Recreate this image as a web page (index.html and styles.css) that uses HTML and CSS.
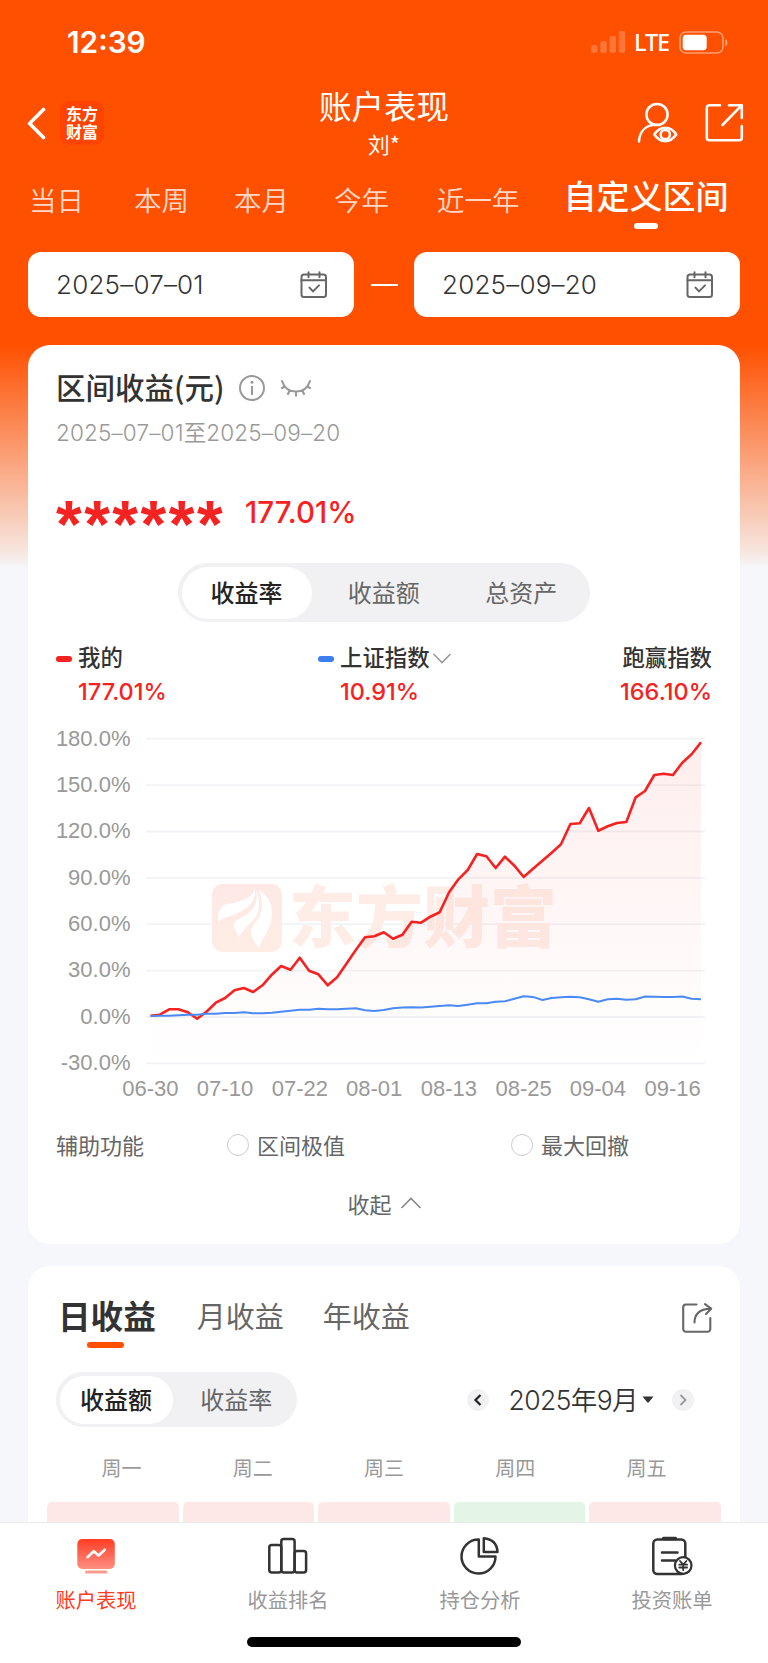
FILE: index.html
```html
<!DOCTYPE html>
<html lang="zh-CN">
<head>
    <meta charset="UTF-8">
    <meta name="viewport" content="width=device-width, initial-scale=1.0">
    <title>账户表现</title>
    <link rel="stylesheet" href="styles.css">
</head>
<body>
    <div class="page">
        <div class="content">
            <!-- Status bar -->
            <div class="status-bar">
                <span class="time">12:39</span>
                <div class="status-icons">
                    <svg class="signal" width="35" height="22" viewBox="0 0 35 22">
                        <rect x="0" y="14" width="6.5" height="8" rx="2"/>
                        <rect x="9.3" y="10" width="6.5" height="12" rx="2"/>
                        <rect x="18.5" y="5" width="6.5" height="17" rx="2"/>
                        <rect x="27.8" y="0" width="6.5" height="22" rx="2"/>
                    </svg>
                    <span class="network">LTE</span>
                    <svg class="battery" width="49" height="23" viewBox="0 0 49 23">
                        <rect x="1" y="1" width="43" height="21" rx="6" fill="none" stroke="#fff" stroke-opacity=".45" stroke-width="1.6"/>
                        <rect x="3.7" y="3.7" width="24" height="15.6" rx="3.5" fill="#fff"/>
                        <path d="M46.4 8v7.4c2.6-1.4 2.6-6 0-7.4z" fill="#fff" fill-opacity=".5"/>
                    </svg>
                </div>
            </div>

            <!-- Navigation -->
            <div class="nav">
                <div class="nav-left">
                    <svg width="20" height="34" viewBox="0 0 20 34" fill="none" stroke="#fff" stroke-width="3.6" stroke-linecap="round" stroke-linejoin="round">
                        <path d="M17.500 3.500 3.600 17.500 17.500 31.500"/>
                    </svg>
                    <div class="logo">东方<br>财富</div>
                </div>
                <div class="nav-title">
                    <h1>账户表现</h1>
                    <p>刘*</p>
                </div>
                <div class="nav-right">
                    <svg width="42" height="42" viewBox="0 0 42 42" fill="none" stroke="#fff" stroke-width="2.5" stroke-linecap="round">
                        <circle cx="20" cy="12.500" r="10.600"/>
                        <path d="M2 39.500C2.500 29 9 23 19.500 22.800"/>
                        <path d="M17.300 32.500C20.500 27.800 24.500 25.800 28.300 25.800s7.800 2 11 6.700c-3.200 4.600-7.200 6.700-11 6.700s-7.800-2.100-11-6.700z" stroke-linejoin="round"/>
                        <circle cx="28.300" cy="32.500" r="4.600"/>
                    </svg>
                    <svg width="40" height="40" viewBox="0 0 40 40" fill="none" stroke="#fff" stroke-width="2.6" stroke-linecap="round" stroke-linejoin="round">
                        <path d="M15 3.200H4.300a2.500 2.500 0 0 0-2.500 2.500v30A2.500 2.500 0 0 0 4.300 38.200h30a2.500 2.500 0 0 0 2.500-2.500V24"/>
                        <path d="M24 3.200h12.800V16M36.300 3.700 17.500 23"/>
                    </svg>
                </div>
            </div>

            <!-- Period tabs -->
            <div class="period-tabs">
                <span class="p1">当日</span>
                <span class="p2">本周</span>
                <span class="p3">本月</span>
                <span class="p4">今年</span>
                <span class="p5">近一年</span>
                <span class="active">自定义区间</span>
            </div>

            <!-- Date range -->
            <div class="date-range">
                <div class="date-box">
                    <span>2025–07–01</span>
                    <svg width="28" height="28" viewBox="0 0 28 28" fill="none" stroke="#666" stroke-width="2" stroke-linecap="round" stroke-linejoin="round">
                        <rect x="1.500" y="3.500" width="24.500" height="22.500" rx="2.500"/>
                        <path d="M1.500 9.300H26M8.500 1.200v5M19.500 1.200v5M9.500 16.600l3.500 3.800 6-6"/>
                    </svg>
                </div>
                <i class="range-dash"></i>
                <div class="date-box">
                    <span>2025–09–20</span>
                    <svg width="28" height="28" viewBox="0 0 28 28" fill="none" stroke="#666" stroke-width="2" stroke-linecap="round" stroke-linejoin="round">
                        <rect x="1.500" y="3.500" width="24.500" height="22.500" rx="2.500"/>
                        <path d="M1.500 9.300H26M8.500 1.200v5M19.500 1.200v5M9.500 16.600l3.500 3.800 6-6"/>
                    </svg>
                </div>
            </div>

            <!-- Profit card -->
            <div class="card profit-card">
                <div class="profit-head">
                    <h2>区间收益(元)</h2>
                    <svg width="28" height="28" viewBox="0 0 28 28" fill="none" stroke="#999" stroke-width="2">
                        <circle cx="14" cy="14" r="12"/>
                        <path d="M14 12v9"/>
                        <circle cx="14" cy="8.200" r="1.500" fill="#999" stroke="none"/>
                    </svg>
                    <svg class="eye" width="32" height="18" viewBox="0 0 32 18" fill="none" stroke="#999" stroke-width="2.100" stroke-linecap="round">
                        <path d="M2 2c2 6.500 7 10.500 14 10.500S28 8.500 30 2M5 7.500 2 9M27 7.500 30 9M9.800 11.200 8 15M16 12.500V16.800M22.200 11.200 24 15"/>
                    </svg>
                </div>
                <p class="profit-range">2025–07–01<b>至</b>2025–09–20</p>
                <div class="profit-value">
                    <span class="masked">******</span>
                    <span class="rate">177.01%</span>
                </div>

                <div class="segment segment-main">
                    <span class="active">收益率</span>
                    <span>收益额</span>
                    <span>总资产</span>
                </div>

                <div class="legend">
                    <div class="legend-item">
                        <div class="name"><i class="mark red"></i>我的</div>
                        <div class="value">177.01%</div>
                    </div>
                    <div class="legend-item index">
                        <div class="name"><i class="mark blue"></i>上证指数
                            <svg width="20" height="13" viewBox="0 0 20 13" fill="none" stroke="#999" stroke-width="1.600"><path d="M1.500 3 10 11.500 18.500 3"/></svg>
                        </div>
                        <div class="value">10.91%</div>
                    </div>
                    <div class="legend-item beat">
                        <div class="name">跑赢指数</div>
                        <div class="value">166.10%</div>
                    </div>
                </div>

                <svg class="chart" width="656" height="380" viewBox="56 725 656 380">
                    <defs>
                        <linearGradient id="area" x1="0" y1="742" x2="0" y2="1063" gradientUnits="userSpaceOnUse">
                            <stop offset="0" stop-color="#f52222" stop-opacity=".08"/>
                            <stop offset="1" stop-color="#f52222" stop-opacity="0"/>
                        </linearGradient>
                        <linearGradient id="mark" x1="0" y1="0" x2="0" y2="1">
                            <stop offset="0" stop-color="#fde8e6"/>
                            <stop offset="1" stop-color="#feede4"/>
                        </linearGradient>
                    </defs>
                    <g stroke="#f1f3f5" stroke-width="1.800">
                        <path d="M146 738.700H705M146 785.100H705M146 831.500H705M146 877.800H705M146 924.200H705M146 970.600H705M146 1017H705M146 1063.300H705"/>
                    </g>
                    <!-- Watermark -->
                    <g class="watermark">
                        <rect x="212" y="884" width="70" height="68" rx="11" fill="url(#mark)"/>
                        <path d="M255 889c-3 10-14 13-28 15-7 1-9 8-9 17 7-4 14-5 20-8 11-5 18-12 17-24z" fill="#fff"/>
                        <path d="M256.500 890c2 14-4 22-14 27-6 3-9 5-9 8 1 5 4 9 6 12 2-6 6-9 12-15 8-8 10-18 5-32z" fill="#fff"/>
                        <path d="M259 890c5 16 3 24-4 33-4 6-5 9-3 14 2 5 5 8 7 11 2-9 14-20 13-37-1-10-6-17-13-21z" fill="#fff"/>
                        <text x="289" y="942" textLength="268">东方财富</text>
                    </g>
                    <polygon fill="url(#area)" points="150.500,1063 150.500,1015.700 159.800,1014.700 169.200,1009.300 178.500,1009.300 187.800,1012.300 197.200,1018.700 206.500,1011.700 215.800,1002.700 225.100,998 234.500,990.300 243.800,988 253.100,992 262.500,985.300 271.800,974.700 281.100,966 290.500,969.700 299.800,957.700 309.100,970.700 318.400,974.300 327.800,985.300 337.100,977.300 346.400,963.700 355.800,950 365.100,937.300 374.400,936.300 383.800,932.300 393.100,938.700 402.400,934.700 411.700,921.700 421.100,922.700 430.400,916.700 439.700,912.300 449.100,892.300 458.400,879.300 467.700,870 477.100,854 486.400,856.300 495.700,868 505,856.700 514.400,865.700 523.700,877 533,868.700 542.400,860.700 551.700,852.700 561,844.300 570.400,824 579.700,823.300 589,808 598.300,830.700 607.700,826.300 617,823 626.300,822 635.700,797.300 645,791 654.300,775 663.700,773.700 673,775 682.300,762.700 691.600,754.300 701,742.300 701,1063"/>
                    <polyline fill="none" stroke="#f52222" stroke-width="2.600" stroke-linejoin="round" points="150.500,1015.700 159.800,1014.700 169.200,1009.300 178.500,1009.300 187.800,1012.300 197.200,1018.700 206.500,1011.700 215.800,1002.700 225.100,998 234.500,990.300 243.800,988 253.100,992 262.500,985.300 271.800,974.700 281.100,966 290.500,969.700 299.800,957.700 309.100,970.700 318.400,974.300 327.800,985.300 337.100,977.300 346.400,963.700 355.800,950 365.100,937.300 374.400,936.300 383.800,932.300 393.100,938.700 402.400,934.700 411.700,921.700 421.100,922.700 430.400,916.700 439.700,912.300 449.100,892.300 458.400,879.300 467.700,870 477.100,854 486.400,856.300 495.700,868 505,856.700 514.400,865.700 523.700,877 533,868.700 542.400,860.700 551.700,852.700 561,844.300 570.400,824 579.700,823.300 589,808 598.300,830.700 607.700,826.300 617,823 626.300,822 635.700,797.300 645,791 654.300,775 663.700,773.700 673,775 682.300,762.700 691.600,754.300 701,742.300"/>
                    <polyline fill="none" stroke="#4a8af4" stroke-width="2" stroke-linejoin="round" points="150.500,1016 159.800,1015.700 169.200,1015.700 178.500,1015.300 187.800,1014.700 197.200,1014.700 206.500,1013.700 215.800,1013.700 225.100,1013 234.500,1013 243.800,1012.300 253.100,1013.300 262.500,1013.300 271.800,1012.700 281.100,1011.700 290.500,1010.700 299.800,1009.700 309.100,1009.700 318.400,1008.700 327.800,1009.300 337.100,1009.300 346.400,1008.700 355.800,1008.300 365.100,1010.300 374.400,1011 383.800,1010 393.100,1008.300 402.400,1007.500 411.700,1007.200 421.100,1007.500 430.400,1006.700 439.700,1006 449.100,1005.300 458.400,1006 467.700,1004.700 477.100,1003.300 486.400,1003.300 495.700,1001.700 505,1001.300 514.400,998.700 523.700,996.200 533,996.900 542.400,1000 551.700,998 561,997.300 570.400,996.700 579.700,997.300 589,999.300 598.300,1001.700 607.700,999.300 617,998.700 626.300,999.700 635.700,999.300 645,996.500 654.300,996.800 663.700,997.100 673,997.100 682.300,996.500 691.600,998.700 701,999.200"/>
                    <g class="axis-y">
                        <text x="130.500" y="745.500">180.0%</text>
                        <text x="130.500" y="791.900">150.0%</text>
                        <text x="130.500" y="838.300">120.0%</text>
                        <text x="130.500" y="884.600">90.0%</text>
                        <text x="130.500" y="931">60.0%</text>
                        <text x="130.500" y="977.400">30.0%</text>
                        <text x="130.500" y="1023.800">0.0%</text>
                        <text x="130.500" y="1070.100">-30.0%</text>
                    </g>
                    <g class="axis-x">
                        <text x="150.300" y="1096">06-30</text>
                        <text x="225" y="1096">07-10</text>
                        <text x="299.800" y="1096">07-22</text>
                        <text x="374.200" y="1096">08-01</text>
                        <text x="448.800" y="1096">08-13</text>
                        <text x="523.600" y="1096">08-25</text>
                        <text x="597.800" y="1096">09-04</text>
                        <text x="672.600" y="1096">09-16</text>
                    </g>
                </svg>

                <div class="helpers">
                    <span class="label">辅助功能</span>
                    <span class="option"><i class="radio"></i>区间极值</span>
                    <span class="option"><i class="radio"></i>最大回撤</span>
                </div>
                <div class="collapse">收起
                    <svg width="22" height="13" viewBox="0 0 22 13" fill="none" stroke="#888" stroke-width="1.600"><path d="M1.500 11 11 1.500l9.500 9.500"/></svg>
                </div>
            </div>

            <!-- Calendar card -->
            <div class="card calendar-card">
                <div class="cal-tabs">
                    <span class="active">日收益</span>
                    <span>月收益</span>
                    <span>年收益</span>
                    <svg width="32" height="32" viewBox="0 0 32 32" fill="none" stroke="#666" stroke-width="2.100" stroke-linecap="round" stroke-linejoin="round">
                        <path d="M15.500 2.500H5A2.800 2.800 0 0 0 2.200 5.300V27A2.800 2.800 0 0 0 5 29.800H26.500A2.800 2.800 0 0 0 29.300 27V16"/>
                        <path d="M13.500 20.500c0-9 5-13.500 16-13.800M24 2.200l6.200 4.500L25 12"/>
                    </svg>
                </div>
                <div class="cal-bar">
                    <div class="segment segment-small">
                        <span class="active">收益额</span>
                        <span>收益率</span>
                    </div>
                    <div class="month">
                        <i class="circle"><svg width="10" height="14" viewBox="0 0 10 14" fill="none" stroke="#222" stroke-width="2.200"><path d="M7.500 2 2.500 7l5 5"/></svg></i>
                        <span class="month-text">2025<b>年</b>9<b>月</b></span>
                        <svg class="caret" width="12" height="7" viewBox="0 0 12 7"><path d="M.5.500h11L6.800 6.200q-.8.700-1.600 0z" fill="#333"/></svg>
                        <i class="circle"><svg width="10" height="14" viewBox="0 0 10 14" fill="none" stroke="#999" stroke-width="1.800"><path d="M2.500 2l5 5-5 5"/></svg></i>
                    </div>
                </div>
                <div class="weekdays">
                    <span>周一</span><span>周二</span><span>周三</span><span>周四</span><span>周五</span>
                </div>
                <div class="days">
                    <i class="up"></i><i class="up"></i><i class="up"></i><i class="down"></i><i class="up"></i>
                </div>
            </div>
        </div>

        <!-- Bottom tab bar -->
        <div class="tab-bar">
            <div class="tabs">
                <div class="tab active">
                    <svg width="42" height="42" viewBox="0 0 42 42">
                        <defs>
                            <linearGradient id="screen" x1="0" y1="0" x2="0" y2="1">
                                <stop offset="0" stop-color="#ff3c22"/>
                                <stop offset="1" stop-color="#ff9083"/>
                            </linearGradient>
                        </defs>
                        <rect x="2.300" y="3" width="37.500" height="30" rx="5" fill="url(#screen)"/>
                        <path d="M12.500 21.200l6.300-6 4.800 4.300 6.200-5.800" fill="none" stroke="#fff" stroke-width="2.600" stroke-linecap="round" stroke-linejoin="round"/>
                        <rect x="10" y="34.500" width="22.500" height="3" rx="1.500" fill="#ff9c90"/>
                    </svg>
                    <span>账户表现</span>
                </div>
                <div class="tab">
                    <svg width="42" height="42" viewBox="0 0 42 42" fill="none" stroke="#333" stroke-width="2.500">
                        <rect x="2.300" y="9" width="12" height="27.500" rx="2.500"/>
                        <rect x="14.300" y="3" width="13.300" height="33.500" rx="2.500"/>
                        <rect x="27.600" y="15" width="11.500" height="21.500" rx="2.500"/>
                    </svg>
                    <span>收益排名</span>
                </div>
                <div class="tab">
                    <svg width="42" height="42" viewBox="0 0 42 42" fill="none" stroke="#333" stroke-width="2.500" stroke-linejoin="round">
                        <path d="M19.800 3.500A17 17 0 1 0 36.500 20.500H19.800z"/>
                        <path d="M24.800 2.300V16H38.500C38 8 33 3 24.800 2.300z"/>
                    </svg>
                    <span>持仓分析</span>
                </div>
                <div class="tab">
                    <svg width="42" height="42" viewBox="0 0 42 42" fill="none" stroke="#333" stroke-width="2.500" stroke-linecap="round">
                        <rect x="2.300" y="3.500" width="32" height="34.500" rx="4"/>
                        <path d="M12.500 2.500h12" stroke-width="3.400"/>
                        <path d="M11 16.500H26.500M11 24.500H24"/>
                        <circle cx="32.200" cy="29.500" r="8.300" fill="#fff" stroke-width="2.200"/>
                        <path d="M29 25l3.200 3.700 3.200-3.700M32.200 28.700v5.300M28.300 28.700h7.800M28.300 31.500h7.800" stroke-width="1.800"/>
                    </svg>
                    <span>投资账单</span>
                </div>
            </div>
            <div class="home-indicator"></div>
        </div>
    </div>
</body>
</html>
```
FILE: styles.css
```css
* {
    box-sizing: border-box;
}

body {
    margin: 0;
    font-family: "Noto Sans CJK SC", sans-serif;
    color: #333;
    background: #f6f7fa;
}

h1, h2, p {
    margin: 0;
    font-weight: 400;
}

b, i {
    font-weight: inherit;
    font-style: normal;
}

svg {
    display: block;
    flex: none;
}

span, .name, .collapse {
    white-space: nowrap;
}

.page {
    width: 768px;
    height: 1663px;
    display: flex;
    flex-direction: column;
    overflow: hidden;
}

.content {
    height: 1522px;
    overflow: hidden;
    background: linear-gradient(#ff5000 0, #ff5000 345px, #fb9465 440px, #f7e4dd 550px, #f6f7fa 568px);
}

/* Status bar */
.status-bar {
    height: 84px;
    padding: 0 40px 0 67px;
    display: flex;
    align-items: center;
    justify-content: space-between;
    color: #fff;
}

.time {
    font-family: Inter, sans-serif;
    font-size: 29.8px;
    font-weight: 600;
}

.status-icons {
    display: flex;
    align-items: center;
}

.signal {
    fill: rgba(255, 255, 255, 0.22);
}

.network {
    width: 34px;
    margin: 0 11px 0 8px;
    font-family: "Noto Sans", sans-serif;
    font-size: 23.5px;
    line-height: 24px;
    font-weight: 500;
    letter-spacing: -1.2px;
}

/* Navigation */
.nav {
    height: 84px;
    padding: 0 23px 0 26px;
    display: grid;
    grid-template-columns: 1fr auto 1fr;
    color: #fff;
}

.nav-left {
    display: flex;
    align-items: center;
    padding-bottom: 7px;
    gap: 14px;
}

.logo {
    width: 44px;
    height: 44px;
    padding-top: 3px;
    border-radius: 9px;
    background: #ff4300;
    text-align: center;
    font-size: 16px;
    line-height: 18.5px;
    font-weight: 700;
}

.nav-title {
    margin-right: 3px;
    text-align: center;
}

.nav-title h1 {
    font-size: 32.5px;
    line-height: 42px;
    font-weight: 400;
}

.nav-title p {
    font-size: 22px;
    line-height: 34px;
}

.nav-right {
    display: flex;
    justify-content: flex-end;
    align-items: flex-start;
    padding-top: 18px;
    gap: 26px;
}

/* Period tabs */
.period-tabs {
    height: 84px;
    padding: 11px 0 0 29px;
    display: flex;
    align-items: flex-start;
    font-size: 27.5px;
    line-height: 40px;
    font-weight: 350;
    color: rgba(255, 255, 255, 0.8);
}

.p1 {
    margin-right: 50px;
}

.p2, .p3 {
    margin-right: 45px;
}

.p4 {
    margin-right: 48px;
}

.p5 {
    margin-right: 44px;
}

.period-tabs .active {
    color: #fff;
    font-size: 33px;
    line-height: 32px;
    font-weight: 500;
    display: flex;
    flex-direction: column;
    align-items: center;
}

.period-tabs .active::after {
    content: "";
    width: 24px;
    height: 6px;
    margin-top: 12px;
    border-radius: 3px;
    background: #fff;
}

/* Date range */
.date-range {
    padding: 0 28px;
    display: flex;
    align-items: center;
    justify-content: space-between;
}

.date-box {
    width: 326px;
    height: 65px;
    padding: 0 26px 0 28px;
    border-radius: 13px;
    background: #fff;
    display: flex;
    align-items: center;
    justify-content: space-between;
    font-family: Inter, sans-serif;
    font-size: 26px;
    font-weight: 350;
    letter-spacing: 0.2px;
}

.range-dash {
    width: 27px;
    height: 2px;
    background: #fff;
}

/* Cards */
.card {
    margin: 0 28px;
    border-radius: 22px;
    background: #fff;
}

.profit-card {
    height: 899px;
    margin-top: 28px;
    padding: 20px 28px 0;
}

.profit-head {
    height: 46px;
    display: flex;
    align-items: center;
}

.profit-head h2 {
    width: 182px;
    padding-bottom: 5px;
    font-size: 29.5px;
    font-weight: 500;
    white-space: nowrap;
}

.profit-head .eye {
    margin-left: 14px;
}

.profit-range {
    height: 44px;
    line-height: 44px;
    font-family: Inter, "Noto Sans CJK SC", sans-serif;
    font-size: 22.5px;
    font-weight: 350;
    letter-spacing: 0.15px;
    color: #999;
}

.profit-value {
    height: 60px;
    margin-top: 26px;
    display: flex;
    align-items: center;
    color: #f52222;
}

.masked {
    width: 189px;
    height: 60px;
    font-family: "Liberation Sans", sans-serif;
    font-size: 66px;
    line-height: 86px;
    font-weight: 700;
    letter-spacing: 2.5px;
}

.rate {
    padding-top: 2px;
    font-family: Inter, sans-serif;
    font-size: 29.5px;
    font-weight: 450;
}

.segment {
    display: flex;
    background: #f1f1f4;
    color: #666;
    font-size: 24px;
}

.segment span {
    flex: 1;
    display: flex;
    align-items: center;
    justify-content: center;
    padding-bottom: 2px;
}

.segment .active {
    background: #fff;
    color: #222;
    font-weight: 500;
}

.segment-main {
    width: 412px;
    height: 59px;
    margin: 22px auto 0;
    padding: 3.5px 0 3.5px 3.5px;
    border-radius: 30px;
}

.segment-main .active {
    flex: 0 0 130px;
    margin-right: 3.5px;
    border-radius: 26px;
}

.legend {
    height: 86px;
    margin-top: 17px;
    display: grid;
    grid-template-columns: 262px 1fr auto;
}

.legend .name {
    height: 35px;
    padding-bottom: 2px;
    display: flex;
    align-items: center;
    font-size: 22.4px;
    font-weight: 500;
}

.legend .name svg {
    position: relative;
    top: 2px;
    margin-left: 2px;
}

.legend .value {
    padding-left: 22px;
    font-family: Inter, sans-serif;
    font-size: 23.5px;
    line-height: 35px;
    font-weight: 450;
    color: #f52222;
}

.legend .beat .name {
    justify-content: flex-end;
}

.legend .beat .value {
    padding-left: 0;
}

.mark {
    position: relative;
    top: 3px;
    width: 16px;
    height: 6px;
    margin-right: 6px;
    border-radius: 3px;
}

.red {
    background: #f52222;
}

.blue {
    background: #3b7ff0;
}

/* Chart */
.chart text {
    font-family: "Liberation Sans", sans-serif;
    font-size: 22px;
    fill: #999;
}

.axis-y {
    text-anchor: end;
}

.axis-x {
    text-anchor: middle;
}

.chart .watermark text {
    font-family: "Noto Sans CJK SC", sans-serif;
    font-size: 67px;
    font-weight: 900;
    fill: #feede6;
}

.helpers {
    height: 44px;
    margin-top: 17px;
    display: grid;
    grid-template-columns: 171px 284px 1fr;
    align-items: center;
    font-size: 22px;
    color: #666;
}

.label, .option {
    padding-bottom: 1px;
}

.option {
    display: flex;
    align-items: center;
}

.radio {
    position: relative;
    top: 1px;
    width: 22px;
    height: 22px;
    margin-right: 8px;
    border: 1.8px solid #ccc;
    border-radius: 50%;
}

.collapse {
    margin-top: 15px;
    height: 44px;
    display: flex;
    align-items: center;
    justify-content: center;
    gap: 8px;
    padding-left: 1px;
    font-size: 22px;
    color: #666;
}

/* Calendar */
.calendar-card {
    height: 300px;
    margin-top: 22px;
    padding: 30px 19px 0;
}

.cal-tabs {
    height: 52px;
    padding: 0 8px 0 11px;
    display: flex;
    align-items: flex-start;
    font-size: 29px;
    line-height: 38px;
    color: #666;
}

.cal-tabs span {
    margin-right: 39px;
}

.cal-tabs svg {
    margin: 6px 0 0 auto;
}

.cal-tabs .active {
    margin-right: 41px;
    font-size: 32.6px;
    font-weight: 700;
    color: #333;
    display: flex;
    flex-direction: column;
    align-items: center;
}

.cal-tabs .active::after {
    content: "";
    width: 37px;
    height: 6px;
    margin: 8px 3px 0 0;
    border-radius: 3px;
    background: #ff5000;
}

.cal-bar {
    margin-top: 24px;
    padding: 0 27px 0 9px;
    display: flex;
    align-items: center;
    justify-content: space-between;
}

.segment-small {
    width: 241px;
    height: 55px;
    padding: 3.5px 0 3.5px 3.5px;
    border-radius: 28px;
}

.segment-small .active {
    flex: 0 0 113px;
    margin-right: 3px;
    border-radius: 24px;
}

.month {
    display: flex;
    align-items: center;
}

.month-text {
    margin: 0 4px 0 20px;
    padding-bottom: 2px;
    font-family: Inter, "Noto Sans CJK SC", sans-serif;
    font-size: 26.5px;
    font-weight: 350;
    letter-spacing: -0.6px;
}

.caret {
    margin-right: 18px;
}

.circle {
    width: 22px;
    height: 22px;
    border-radius: 50%;
    background: #f1f1f4;
    display: flex;
    align-items: center;
    justify-content: center;
}

.weekdays {
    height: 75px;
    padding: 5px 9px 0;
    display: grid;
    grid-template-columns: repeat(5, 1fr);
    align-items: center;
    justify-items: center;
    font-size: 20px;
    color: #999;
}

.days {
    display: grid;
    grid-template-columns: repeat(5, 1fr);
    gap: 4px;
}

.days i {
    height: 60px;
    border-radius: 5px;
}

.up {
    background: #fde8e7;
}

.down {
    background: #e4f4e6;
}

/* Bottom tab bar */
.tab-bar {
    height: 141px;
    border-top: 1px solid #e8eaec;
    background: #fff;
}

.tabs {
    height: 114px;
    display: grid;
    grid-template-columns: repeat(4, 1fr);
}

.tab {
    padding-top: 13px;
    display: flex;
    flex-direction: column;
    align-items: center;
    gap: 7px;
    font-size: 20.3px;
    line-height: 28px;
    color: #999;
}

.tab.active {
    color: #ff3c22;
}

.home-indicator {
    width: 274px;
    height: 10px;
    margin: 0 auto;
    border-radius: 5px;
    background: #000;
}
```
